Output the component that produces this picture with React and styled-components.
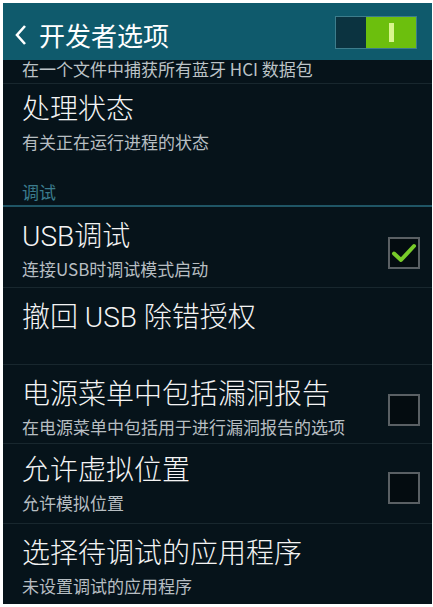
import React from "react";
import styled, { createGlobalStyle } from "styled-components";

const Global = createGlobalStyle`
  html, body { background: #ffffff; }
  body {
    margin: 3px 1px 0 3px;
    font-family: "Roboto", "Noto Sans CJK SC", "Noto Sans", sans-serif;
  }
`;

const Screen = styled.div`
  width: 429px;
  height: 601px;
  overflow: hidden;
  background: #06131a;
  display: flex;
  flex-direction: column;
`;

const Header = styled.header`
  flex: none;
  height: 57px;
  box-sizing: border-box;
  padding: 6px 15px 0 10px;
  background: #0f5a6c;
  display: flex;
  align-items: center;
  justify-content: space-between;
`;

const TitleGroup = styled.div`
  display: flex;
  align-items: center;
  gap: 10px;
`;

const Title = styled.h1`
  margin: 0;
  font-size: 26px;
  font-weight: 400;
  color: #ffffff;
  line-height: 32px;
  font-family: "Noto Sans CJK SC", sans-serif;
`;

const Toggle = styled.div`
  width: 82px;
  height: 33px;
  box-sizing: border-box;
  border: 1px solid #3d7d8c;
  display: flex;
  margin-top: -4px;
`;

const ToggleOff = styled.div`
  width: 30px;
  background: #0b3340;
`;

const ToggleOn = styled.div`
  flex: 1;
  background: #6cbf0d;
  display: flex;
  align-items: center;
  justify-content: center;
`;

const ToggleBar = styled.div`
  width: 5px;
  height: 19px;
  background: #d8f58e;
`;

const List = styled.div`
  flex: 1;
  display: flex;
  flex-direction: column;
`;

const PartialRow = styled.div`
  flex: none;
  height: 24px;
  overflow: hidden;
  display: flex;
  align-items: flex-end;
  padding: 0 0 6px 19px;
  box-sizing: border-box;
  border-bottom: 1px solid #18272e;
  font-size: 17px;
  line-height: 17px;
  color: #bcc3c7;
  white-space: nowrap;
  font-family: "Noto Sans CJK SC", sans-serif;
`;

const Row = styled.div`
  flex: none;
  height: ${(p) => p.$h}px;
  box-sizing: border-box;
  padding: ${(p) => p.$top}px 12px 0 19px;
  border-bottom: ${(p) => (p.$last ? "none" : "1px solid #18272e")};
  display: flex;
  align-items: flex-start;
  justify-content: space-between;
`;

const Texts = styled.div`
  display: flex;
  flex-direction: column;
`;

const RowTitle = styled.div`
  font-size: 28px;
  line-height: 38px;
  font-weight: 300;
  color: #f4f4f4;
  white-space: nowrap;
`;

const RowSub = styled.div`
  margin-top: 1px;
  font-size: 17px;
  line-height: 24px;
  color: #b7bec2;
  white-space: nowrap;
  font-family: "Noto Sans CJK SC", sans-serif;
`;

const Section = styled.div`
  flex: none;
  height: 44px;
  box-sizing: border-box;
  padding: 19px 0 0 19px;
  border-bottom: 2px solid #1f5565;
  font-size: 17px;
  line-height: 20px;
  color: #3b7b8d;
  font-family: "Noto Sans CJK SC", sans-serif;
`;

const Box = styled.div`
  flex: none;
  width: 32px;
  height: 32px;
  box-sizing: border-box;
  border: 2px solid #5a6064;
  background: #040c10;
  display: flex;
  align-items: center;
  justify-content: center;
  align-self: center;
`;

function Check({ checked }) {
  return (
    <Box>
      {checked && (
        <svg width="28" height="28" viewBox="0 0 28 28">
          <path
            d="M4 14.5 L11 21 L24 7"
            fill="none"
            stroke="#78cb2a"
            strokeWidth="4"
            strokeLinecap="round"
            strokeLinejoin="round"
          />
        </svg>
      )}
    </Box>
  );
}

const rows = [
  { t: "USB调试", s: "连接USB时调试模式启动", check: true, h: 81 },
  { t: "撤回 USB 除错授权", h: 77 },
  { t: "电源菜单中包括漏洞报告", s: "在电源菜单中包括用于进行漏洞报告的选项", check: false, h: 79 },
  { t: "允许虚拟位置", s: "允许模拟位置", check: false, h: 80, top: 8 },
  { t: "选择待调试的应用程序", s: "未设置调试的应用程序", h: 80, last: true },
];

export default function App() {
  return (
    <>
      <Global />
      <Screen>
        <Header>
          <TitleGroup>
            <svg width="16" height="22" viewBox="0 0 16 22">
              <path d="M12 2 L4 11 L12 20" fill="none" stroke="#ffffff" strokeWidth="2.6" />
            </svg>
            <Title>开发者选项</Title>
          </TitleGroup>
          <Toggle>
            <ToggleOff />
            <ToggleOn>
              <ToggleBar />
            </ToggleOn>
          </Toggle>
        </Header>
        <List>
          <PartialRow>在一个文件中捕获所有蓝牙 HCI 数据包</PartialRow>
          <Row $h={79} $top={7} $last>
            <Texts>
              <RowTitle>处理状态</RowTitle>
              <RowSub>有关正在运行进程的状态</RowSub>
            </Texts>
          </Row>
          <Section>调试</Section>
          {rows.map((r) => (
            <Row key={r.t} $h={r.h} $top={r.top ?? 11} $last={r.last}>
              <Texts>
                <RowTitle>{r.t}</RowTitle>
                {r.s && <RowSub>{r.s}</RowSub>}
              </Texts>
              {r.check !== undefined && <Check checked={r.check} />}
            </Row>
          ))}
        </List>
      </Screen>
    </>
  );
}
